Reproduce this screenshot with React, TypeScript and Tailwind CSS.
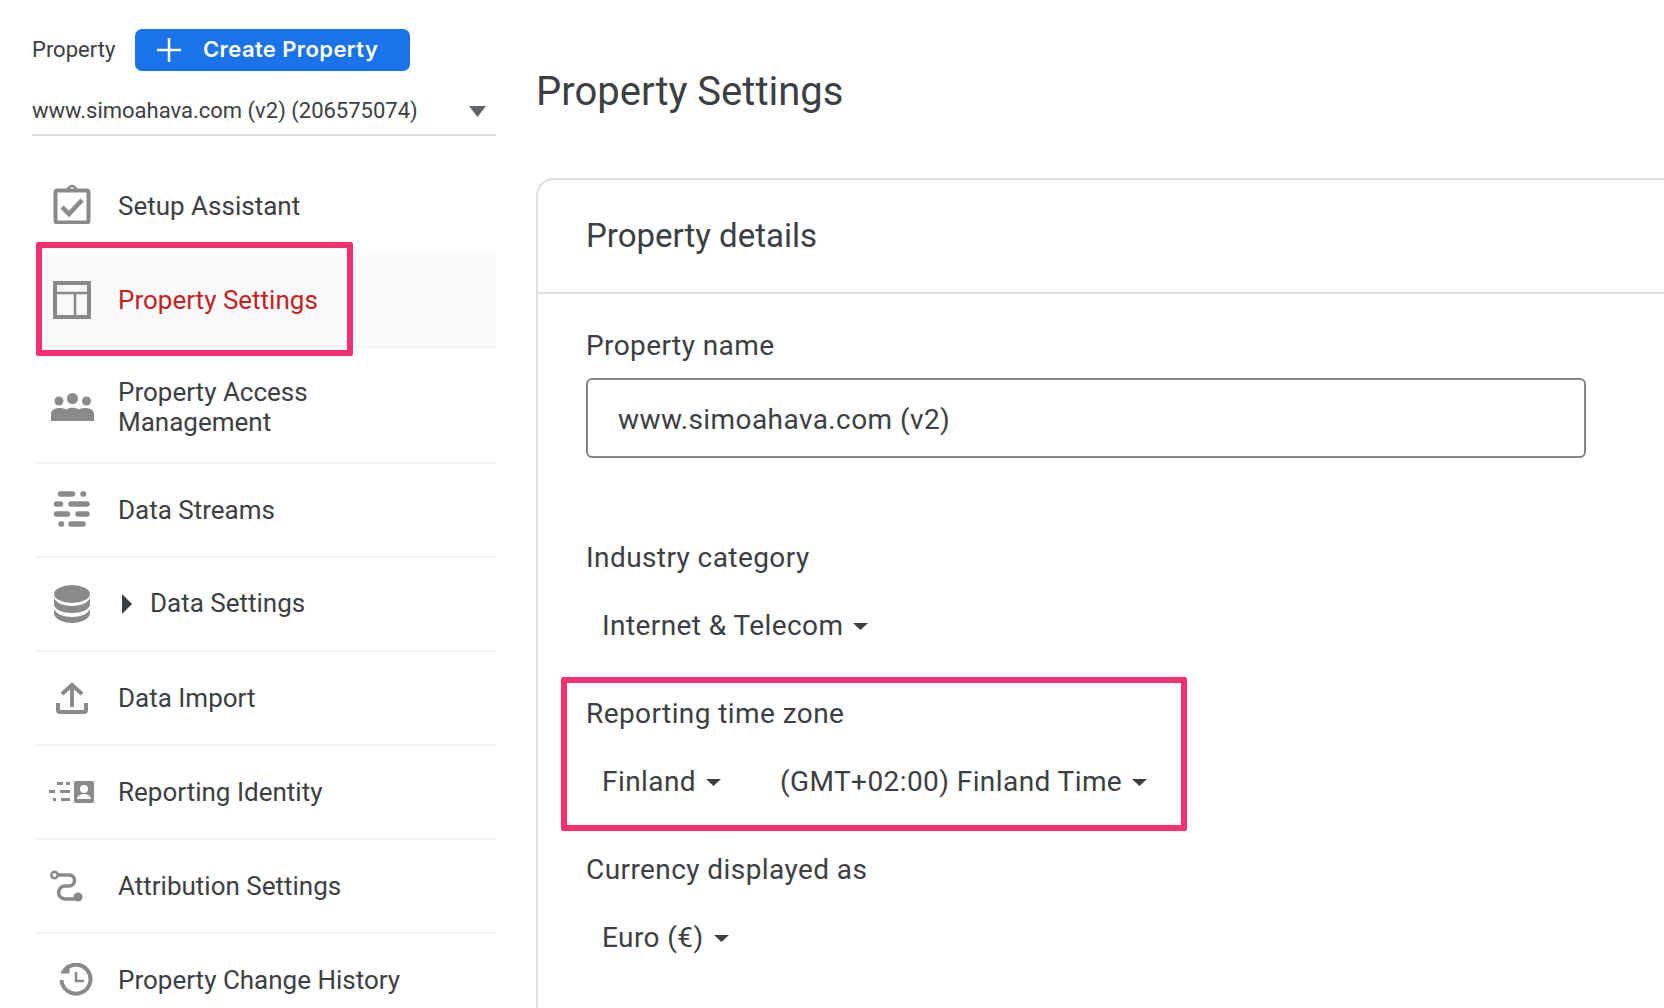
import React from "react";

const G = "#8a8a8a";

const IconSetup = () => (
  <svg width="38" height="40" viewBox="0 0 38 40" fill="none" className="mb-[4px]">
    <path d="M15 6a4 4 0 0 1 8 0" stroke={G} strokeWidth="2.5" />
    <rect x="2.5" y="6.5" width="33" height="32" rx="2" stroke={G} strokeWidth="4" />
    <path d="M9 23l7 7 13-14" stroke={G} strokeWidth="4.500" />
  </svg>
);
const IconLayout = () => (
  <svg width="38" height="38" viewBox="0 0 38 38" fill="none" stroke={G} strokeWidth="4">
    <rect x="2" y="2" width="34" height="34" />
    <path d="M2 12h34M22 12v24" strokeWidth="2.500" />
  </svg>
);
const IconPeople = () => (
  <svg width="46" height="28" viewBox="0 0 46 28" fill={G} className="ml-[2px] mt-[4px]">
    <circle cx="9" cy="8" r="4.500" />
    <circle cx="22.5" cy="5.5" r="5.500" />
    <circle cx="36.500" cy="8" r="4.500" />
    <path d="M1 28v-7c0-4 4-6 8.500-6 2.500 0 5 .5 6.500 1.500 2-1.200 4-1.800 6.500-1.800s4.500.6 6.500 1.800c1.500-1 4-1.500 6.500-1.500 4.500 0 8.500 2 8.500 6v7z" />
  </svg>
);
const IconStreams = () => (
  <svg width="38" height="38" viewBox="0 0 38 38" stroke={G} strokeWidth="5.500" strokeLinecap="round" fill="none">
    <path d="M7.500 3h12M30 3h.5M3.500 13h4M18 13h16M3.500 23h11M25 23h9M8 33h.5M18 33h12" />
  </svg>
);
const IconDb = () => (
  <svg width="38" height="38" viewBox="0 0 38 38" fill={G}>
    <ellipse cx="19" cy="9" rx="18" ry="9" />
    <path d="M1 13c2 5 10 8 18 8s16-3 18-8v7c-1 5-9 8-18 8S2 25 1 20z" />
    <path d="M1 24c2 5 10 8 18 8s16-3 18-8v5c-1 5-9 9-18 9S2 34 1 29z" />
  </svg>
);
const IconUpload = () => (
  <svg width="32" height="32" viewBox="0 0 32 32" fill="none" stroke={G} strokeWidth="4">
    <path d="M16 25V4M6 12l10-9 10 9" />
    <path d="M2 21v7a2 2 0 0 0 2 2h24a2 2 0 0 0 2-2v-7" />
  </svg>
);
const IconIdentity = () => (
  <svg width="46" height="22" viewBox="0 0 46 22" fill={G} className="mr-[3px]">
    <path d="M9 1h6v3H9zM18 1h4v3h-4zM1 9h6v3H1zM12 9h10v3H12zM5 17h3v3H5zM13 17h9v3h-9z" />
    <path fillRule="evenodd" d="M28 0h16a2 2 0 0 1 2 2v18a2 2 0 0 1-2 2H28a2 2 0 0 1-2-2V2a2 2 0 0 1 2-2zm8 4a4 4 0 1 0 0 8 4 4 0 0 0 0-8zm-7 14h14c0-3-4-5-7-5s-7 2-7 5z" />
  </svg>
);
const IconAttr = () => (
  <svg width="34" height="32" viewBox="0 0 34 32" fill="none" stroke={G} strokeWidth="3.500" className="mr-[10px]">
    <circle cx="4.500" cy="5" r="3.200" strokeWidth="2.500" />
    <path d="M8 5h11a5.500 5.500 0 0 1 0 11h-4a6.500 6.500 0 0 0 0 13h10" />
    <circle cx="28" cy="27" r="4.500" fill={G} stroke="none" />
  </svg>
);
const IconHistory = () => (
  <svg width="34" height="34" viewBox="0 0 34 34" fill="none" stroke={G} strokeWidth="4" className="ml-[8px]">
    <path d="M5 8a14.500 14.500 0 1 1-2.500 9" />
    <path d="M2 9h7V2.500" strokeWidth="3" />
    <path d="M17 9v9h8" strokeWidth="2.500" />
  </svg>
);

const Caret = ({ w = 15, h = 7, c = "#3c4043" }: { w?: number; h?: number; c?: string }) => (
  <svg width={w} height={h} viewBox="0 0 15 7" preserveAspectRatio="none">
    <path d="M0 0h15L7.500 7z" fill={c} />
  </svg>
);

function Row({
  icon,
  children,
  h = "h-[94px]",
  cls = "",
}: {
  icon: React.ReactNode;
  children: React.ReactNode;
  h?: string;
  cls?: string;
}) {
  return (
    <div className={`relative flex items-center border-b-2 border-[#f3f4f5] ${h} ${cls}`}>
      <div className="flex w-[72px] shrink-0 items-center justify-center">{icon}</div>
      <div className="ml-[10px] min-w-0 flex-1">{children}</div>
    </div>
  );
}

function Select({ label, cls = "" }: { label: string; cls?: string }) {
  return (
    <div className={`flex items-center ${cls}`}>
      <span>{label}</span>
      <span className="ml-[10px]">
        <Caret />
      </span>
    </div>
  );
}

export default function App() {
  return (
    <div
      className="flex h-[1008px] w-[1664px] overflow-hidden bg-white text-[#3c4043]"
      style={{ fontFamily: "Roboto, 'Liberation Sans', sans-serif" }}
    >
      <aside className="w-[496px] shrink-0 pl-[32px] pt-[29px]">
        <div className="flex h-[42px] items-center">
          <span className="mb-[2px] w-[103px] text-[22px]">Property</span>
          <div className="flex h-[42px] w-[275px] items-center rounded-[7px] bg-[#1a73e8] pb-[1px] pl-[21px] text-[22px] font-semibold tracking-[0.4px] text-white" style={{ fontFamily: "Inter, sans-serif" }}>
            <svg width="26" height="26" viewBox="0 0 26 26" stroke="#fff" strokeWidth="2.500">
              <path d="M13 1v24M1 13h24" />
            </svg>
            <span className="ml-[21px]">Create Property</span>
          </div>
        </div>
        <div className="mt-[19px] flex h-[46px] items-center justify-between border-b-2 border-[#dadce0] pb-[4px] pr-[10px] text-[22px]">
          <span>www.simoahava.com (v2) (206575074)</span>
          <span className="mt-[2px] flex">
            <Caret w={17} h={11} c="#5f6368" />
          </span>
        </div>
        <div className="ml-[4px] mt-[24px]">
          <Row icon={<IconSetup />} h="h-[93px]" cls="border-transparent">
            <span className="mt-[1px] block text-[26px]">Setup Assistant</span>
          </Row>
          <Row icon={<IconLayout />} h="h-[95px]" cls="bg-[#f8f9fa]">
            <span className="mt-[2px] block text-[26px] text-[#c5221f]">Property Settings</span>
            <div className="absolute left-0 top-[-11px] h-[114px] w-[317px] rounded-[2px] border-[6px] border-[#f8306f]" />
          </Row>
          <Row icon={<IconPeople />} h="h-[116px]">
            <span className="mt-[4px] block max-w-[280px] text-[26px] leading-[30px]">Property Access Management</span>
          </Row>
          <Row icon={<IconStreams />}>
            <span className="text-[26px]">Data Streams</span>
          </Row>
          <Row icon={<IconDb />}>
            <div className="flex items-center text-[26px]">
              <svg width="10" height="20" viewBox="0 0 10 20" className="ml-[4px]">
                <path d="M0 0l10 10L0 20z" fill="#3c4043" />
              </svg>
              <span className="mb-[2px] ml-[18px]">Data Settings</span>
            </div>
          </Row>
          <Row icon={<IconUpload />}>
            <span className="text-[26px]">Data Import</span>
          </Row>
          <Row icon={<IconIdentity />}>
            <span className="text-[26px]">Reporting Identity</span>
          </Row>
          <Row icon={<IconAttr />}>
            <span className="text-[26px]">Attribution Settings</span>
          </Row>
          <Row icon={<IconHistory />}>
            <span className="text-[26px]">Property Change History</span>
          </Row>
        </div>
      </aside>
      <main className="ml-[40px] flex-1">
        <h1 className="mt-[69px] h-[46px] text-[40px] leading-[46px]">Property Settings</h1>
        <section className="mt-[63px] h-[900px] rounded-tl-[18px] border-l-2 border-t-2 border-[#e0e0e0]">
          <div className="flex h-[114px] items-center border-b-2 border-[#e0e0e0] pl-[48px] text-[33px]">
            Property details
          </div>
          <div className="pl-[48px] text-[28px] tracking-[0.42px]">
            <div className="mt-[36px] leading-[32px]">Property name</div>
            <div className="mt-[16px] flex h-[80px] w-[1000px] items-center rounded-[6px] border-2 border-[#80868b] pl-[30px] pt-[3px]">
              www.simoahava.com (v2)
            </div>
            <div className="mt-[84px] leading-[32px]">Industry category</div>
            <Select label="Internet & Telecom" cls="mt-[36px] ml-[16px] h-[32px]" />
            <div className="relative mt-[56px]">
              <div className="leading-[32px]">Reporting time zone</div>
              <div className="ml-[16px] mt-[36px] flex h-[32px] items-center">
                <Select label="Finland" />
                <Select label="(GMT+02:00) Finland Time" cls="ml-[59px]" />
              </div>
              <div className="absolute left-[-25px] top-[-21px] h-[154px] w-[626px] rounded-[2px] border-[6px] border-[#f8306f]" />
            </div>
            <div className="mt-[56px] leading-[32px]">Currency displayed as</div>
            <Select label="Euro (€)" cls="mt-[36px] ml-[16px] h-[32px]" />
          </div>
        </section>
      </main>
    </div>
  );
}
